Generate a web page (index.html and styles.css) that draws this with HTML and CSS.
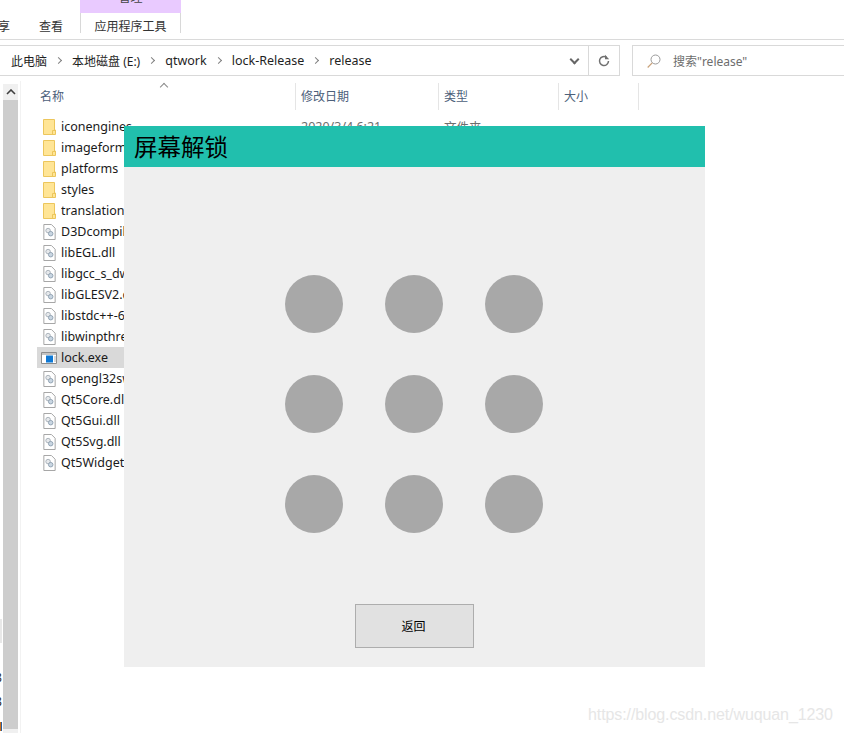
FILE: index.html
```html
<!DOCTYPE html>
<html lang="en">
<head>
    <meta charset="UTF-8">
    <title>屏幕解锁</title>
    <link rel="stylesheet" href="styles.css">
</head>
<body>
    <svg class="defs">
        <symbol id="folder" viewBox="0 0 13 16">
            <path d="M.5.5h11v10.500l1 0v4.500h-12z" fill="#ffe596" stroke="#ecc65c"/>
            <path d="M9.500 15v-3.500h2.500" fill="none" stroke="#ecc65c"/>
        </symbol>
        <symbol id="dll" viewBox="0 0 13 17">
            <path d="M.5.500h8l4 4v12h-12z" fill="#fff" stroke="#a0a0a0"/>
            <circle cx="5" cy="7" r="2.400" fill="#e6e9ec" stroke="#a8b0b8"/>
            <circle cx="7.800" cy="10.300" r="2.400" fill="#c9d6e2" stroke="#8fa0b0"/>
        </symbol>
        <symbol id="exe" viewBox="0 0 16 12">
            <path d="M.5.500h15v11h-15z" fill="#fff" stroke="#8d8d8d"/>
            <path d="M1 1h14v2h-14z" fill="#c4c4c4"/>
            <path d="M5 3.500h7v7h-7z" fill="#0f78d4"/>
            <path d="M13 5h2M13 7h2M13 9h2" stroke="#b4b4b4"/>
        </symbol>
    </svg>

    <div class="explorer">
        <div class="ribbon">
            <div class="tab tab-cut">享</div>
            <div class="tab tab-view">查看</div>
            <div class="tab-group">
                <div class="tab-manage"><span>管理</span></div>
                <div class="tab-tools">应用程序工具</div>
            </div>
            <div class="window-title">release</div>
        </div>

        <div class="address-row">
            <div class="address">
                <span class="crumb crumb-cjk">此电脑</span><span class="sep"></span>
                <span class="crumb crumb-cjk">本地磁盘 (E:)</span><span class="sep"></span>
                <span class="crumb">qtwork</span><span class="sep"></span>
                <span class="crumb">lock-Release</span><span class="sep"></span>
                <span class="crumb">release</span>
                <span class="chevron"></span>
                <span class="refresh">
                    <svg width="14" height="14" viewBox="0 0 14 14"><path d="M11.500 7a4.500 4.500 0 1 1-2-3.750" fill="none" stroke="#707070" stroke-width="1.500"/><path d="M8 .8v4.400h4.200z" fill="#707070"/></svg>
                </span>
            </div>
            <div class="search">
                <svg width="14" height="14" viewBox="0 0 14 14"><circle cx="8.500" cy="5.500" r="4.500" fill="none" stroke="#9a9a9a"/><path d="M5.200 8.800l-4.500 4.700" stroke="#c9a27a" stroke-width="1.200"/></svg>
                <span>搜索"release"</span>
            </div>
        </div>

        <div class="body">
            <div class="edge-left">
                <div class="edge-mark"></div>
                <div class="edge-digits">
                    <div>8</div>
                    <div>8</div>
                </div>
                <div class="edge-flag"></div>
            </div>
            <div class="scrollbar">
                <div class="scroll-up"><svg width="10" height="6" viewBox="0 0 10 6"><path d="M1 5l4-4 4 4" fill="none" stroke="#404040" stroke-width="1.600"/></svg></div>
                <div class="scroll-thumb"></div>
                <div class="scroll-down"></div>
            </div>
            <div class="files">
                <div class="file-head">
                    <div class="col col-name">名称<span class="sort"></span></div>
                    <div class="col col-date">修改日期</div>
                    <div class="col col-type">类型</div>
                    <div class="col col-size">大小</div>
                </div>
                <ul class="file-list">
                    <li><svg class="ico"><use href="#folder"/></svg><span class="name">iconengines</span><span class="date">2020/3/4 6:21</span><span class="type">文件夹</span></li>
                    <li><svg class="ico"><use href="#folder"/></svg><span class="name">imageformats</span></li>
                    <li><svg class="ico"><use href="#folder"/></svg><span class="name">platforms</span></li>
                    <li><svg class="ico"><use href="#folder"/></svg><span class="name">styles</span></li>
                    <li><svg class="ico"><use href="#folder"/></svg><span class="name">translations</span></li>
                    <li><svg class="ico"><use href="#dll"/></svg><span class="name">D3Dcompiler_47.dll</span></li>
                    <li><svg class="ico"><use href="#dll"/></svg><span class="name">libEGL.dll</span></li>
                    <li><svg class="ico"><use href="#dll"/></svg><span class="name">libgcc_s_dw2-1.dll</span></li>
                    <li><svg class="ico"><use href="#dll"/></svg><span class="name">libGLESV2.dll</span></li>
                    <li><svg class="ico"><use href="#dll"/></svg><span class="name">libstdc++-6.dll</span></li>
                    <li><svg class="ico"><use href="#dll"/></svg><span class="name">libwinpthread-1.dll</span></li>
                    <li class="selected"><svg class="ico ico-exe"><use href="#exe"/></svg><span class="name">lock.exe</span></li>
                    <li><svg class="ico"><use href="#dll"/></svg><span class="name">opengl32sw.dll</span></li>
                    <li><svg class="ico"><use href="#dll"/></svg><span class="name">Qt5Core.dll</span></li>
                    <li><svg class="ico"><use href="#dll"/></svg><span class="name">Qt5Gui.dll</span></li>
                    <li><svg class="ico"><use href="#dll"/></svg><span class="name">Qt5Svg.dll</span></li>
                    <li><svg class="ico"><use href="#dll"/></svg><span class="name">Qt5Widgets.dll</span></li>
                </ul>
            </div>
        </div>
    </div>

    <div class="dialog">
        <div class="dialog-title">屏幕解锁</div>
        <div class="dialog-body">
            <div class="dots">
                <div class="dot"></div><div class="dot"></div><div class="dot"></div>
                <div class="dot"></div><div class="dot"></div><div class="dot"></div>
                <div class="dot"></div><div class="dot"></div><div class="dot"></div>
            </div>
            <button class="btn-back">返回</button>
        </div>
    </div>

    <div class="watermark">https://blog.csdn.net/wuquan_1230</div>
</body>
</html>
```

FILE: styles.css
```css
* {
    box-sizing: border-box;
}

html, body {
    margin: 0;
    height: 100%;
    overflow: hidden;
}

body {
    background: #fff;
    color: #1a1a1a;
    font-family: "Noto Sans", "Noto Sans CJK SC", sans-serif;
    font-size: 12.5px;
}

.defs {
    display: none;
}

/* Ribbon */
.ribbon {
    display: flex;
    height: 40px;
    border-bottom: 1px solid #dadada;
    font-size: 12px;
    font-family: "Noto Sans CJK SC", sans-serif;
    overflow: hidden;
}

.tab {
    padding-top: 17px;
    line-height: 17px;
    color: #333;
}

.tab-cut {
    width: 41px;
    margin-left: -2px;
}

.tab-view {
    width: 41px;
}

.tab-group {
    width: 101px;
}

.tab-manage {
    height: 13px;
    background: #e9caff;
    text-align: center;
    overflow: hidden;
}

.tab-manage span {
    display: block;
    margin-top: -12px;
    color: #444;
}

.tab-tools {
    height: 20px;
    border: 1px solid #d8d8d8;
    border-width: 0 1px;
    text-align: center;
    line-height: 25px;
    color: #333;
}

.window-title {
    margin: -13px 0 0 14px;
    color: #a8a8a8;
    font-family: "Noto Sans", sans-serif;
}

/* Address bar */
.address-row {
    display: flex;
    height: 36px;
    margin-top: 5px;
}

.address {
    display: flex;
    align-items: center;
    width: 620px;
    height: 31px;
    padding-left: 11px;
    border: 1px solid #d9d9d9;
    border-left: 0;
    white-space: pre;
}

.crumb {
    color: #1f1f1f;
}

.crumb-cjk {
    font-size: 12px;
}

.sep {
    width: 5px;
    height: 5px;
    margin: 0 11px 0 9px;
    border: solid #808080;
    border-width: 1.5px 1.5px 0 0;
    transform: rotate(45deg);
}

.chevron {
    width: 7px;
    height: 7px;
    margin: -3px 10px 0 auto;
    border: solid #666;
    border-width: 0 2px 2px 0;
    transform: rotate(45deg);
}

.refresh {
    display: flex;
    align-items: center;
    justify-content: center;
    width: 31px;
    height: 29px;
    border-left: 1px solid #d9d9d9;
}

.search {
    display: flex;
    align-items: center;
    flex: 1;
    height: 31px;
    margin-left: 12px;
    padding-left: 14px;
    border: 1px solid #d9d9d9;
    border-right: 0;
    color: #6d6d6d;
    font-size: 12px;
}

.search span {
    margin-left: 12px;
}

/* Main area */
.body {
    display: flex;
    height: 652px;
}

.edge-left {
    width: 3px;
    overflow: hidden;
}

.edge-mark {
    width: 2px;
    height: 24px;
    margin-top: 538px;
    background: #e8e8e8;
}

.edge-digits {
    margin: 23px 0 8px -5px;
    font-size: 12px;
    line-height: 24px;
}

.edge-flag {
    width: 2px;
    height: 9px;
    background: linear-gradient(90deg, #c96f1c 50%, #2a5d9c 50%);
}

.scrollbar {
    width: 15px;
    padding-top: 3px;
}

.scroll-up {
    display: flex;
    align-items: center;
    justify-content: center;
    height: 16px;
    background: #f0f0f0;
}

.scroll-thumb {
    height: 629px;
    background: #cdcdcd;
}

.scroll-down {
    height: 4px;
    background: #f0f0f0;
}

.files {
    flex: 1;
    margin-left: 2px;
    border-left: 1px solid #f2f2f2;
    padding-left: 15px;
}

.file-head {
    display: flex;
    height: 27px;
    margin-top: 2px;
    color: #4c607a;
    font-size: 12px;
    font-family: "Noto Sans CJK SC", sans-serif;
    line-height: 26px;
}

.col {
    padding-left: 5px;
    border-right: 1px solid #e5e5e5;
    position: relative;
}

.col-name {
    width: 260px;
    padding-left: 4px;
}

.col-date {
    width: 143px;
}

.col-type {
    width: 120px;
}

.col-size {
    width: 80px;
}

.sort {
    position: absolute;
    left: 125px;
    top: 1px;
    width: 6px;
    height: 6px;
    border: solid #8a8a8a;
    border-width: 1px 0 0 1px;
    transform: rotate(45deg);
}

.file-list {
    list-style: none;
    margin: 6px 0 0;
    padding: 0;
}

.file-list li {
    display: flex;
    align-items: center;
    width: 600px;
    height: 21px;
    margin-left: 1px;
    padding-left: 6px;
    white-space: nowrap;
}

.file-list .selected {
    background: #d9d9d9;
}

.ico {
    flex: none;
    width: 13px;
    height: 16px;
    margin-right: 5px;
}

.ico-exe {
    width: 16px;
    height: 12px;
    margin: 0 4px 0 -2px;
}

.name {
    width: 240px;
    overflow: hidden;
}

.date {
    width: 143px;
    color: #6d6d6d;
}

.type {
    color: #6d6d6d;
}

/* Lock dialog over the explorer window */
.dialog {
    position: absolute;
    left: 124px;
    top: 126px;
    width: 581px;
    height: 541px;
    background: #efefef;
    color: #000;
    font-family: "Noto Sans CJK SC", sans-serif;
}

.dialog-title {
    height: 41px;
    padding-left: 10px;
    background: #21bfad;
    font-size: 23.5px;
    line-height: 41px;
}

.dialog-body {
    display: flex;
    flex-direction: column;
    align-items: center;
}

.dots {
    display: grid;
    grid-template-columns: repeat(3, 58px);
    gap: 42px;
    margin: 108px 2px 0 0;
}

.dot {
    width: 58px;
    height: 58px;
    border-radius: 50%;
    background: #a8a8a8;
}

.btn-back {
    width: 119px;
    height: 44px;
    margin-top: 71px;
    padding: 0 2px 2px 0;
    background: #e1e1e1;
    border: 1px solid #adadad;
    color: #000;
    font-family: "Noto Sans CJK SC", sans-serif;
    font-size: 12px;
}

.watermark {
    position: absolute;
    left: 588px;
    top: 706px;
    color: #e6e6e6;
    font-family: "Liberation Sans", sans-serif;
    font-size: 16px;
    letter-spacing: -.1px;
}
```
